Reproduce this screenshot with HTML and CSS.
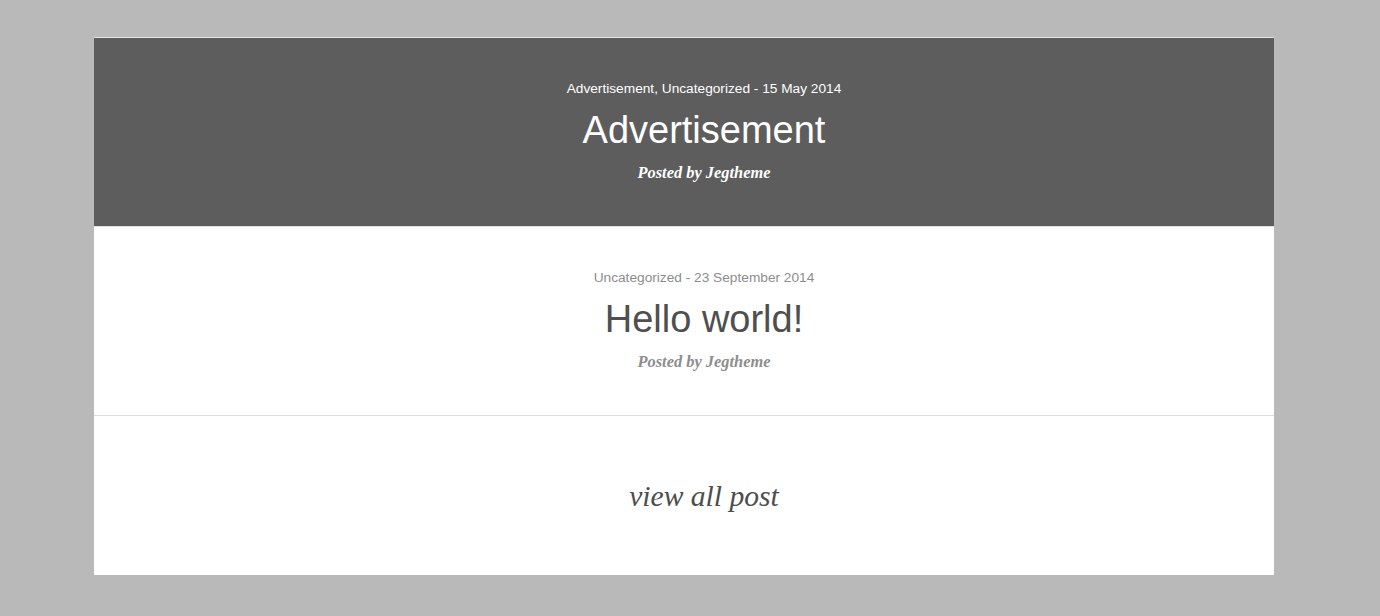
FILE: index.html
```html
<!DOCTYPE html>
<html>
<head>
    <meta charset="utf-8">
    <title>Posts</title>
    <link rel="stylesheet" href="styles.css">
</head>
<body>
    <div class="panel">
        <div class="post post-dark">
            <div class="meta">Advertisement, Uncategorized - 15 May 2014</div>
            <h2 class="title">Advertisement</h2>
            <div class="author">Posted by Jegtheme</div>
        </div>

        <div class="post">
            <div class="meta">Uncategorized - 23 September 2014</div>
            <h2 class="title">Hello world!</h2>
            <div class="author">Posted by Jegtheme</div>
        </div>

        <div class="view-all">
            <a href="#">view all post</a>
        </div>
    </div>
</body>
</html>
```

FILE: styles.css
```css
body {
    font-family: "Liberation Sans", Arial, sans-serif;
    background-color: #b9b9b9;
    margin: 0;
    padding: 37px 0 0 94px;
    color: #555;
}

.panel {
    width: 1180px;
    background-color: #FFF;
    border-top: 1px solid #e4e4e4;
}

.post {
    text-align: center;
    padding: 41px 0 43px 40px;
    border-bottom: 1px solid #ddd;
}

.post-dark {
    background-color: #5d5d5d;
    color: #FFF;
}

.meta {
    font-size: 13.7px;
    line-height: 20px;
    color: #8d8d8d;
}

.title {
    font-size: 38px;
    font-weight: 400;
    line-height: 46px;
    margin: 8px 0 0;
    color: #4f4f4f;
}

.author {
    font-family: "Liberation Serif", Georgia, serif;
    font-style: italic;
    font-weight: 700;
    font-size: 16.4px;
    line-height: 20px;
    margin-top: 10px;
    color: #8d8d8d;
}

.post-dark .meta,
.post-dark .title,
.post-dark .author {
    color: #FFF;
}

.view-all {
    text-align: center;
    padding: 65px 0 64px 40px;
}

.view-all a {
    font-family: "Liberation Serif", Georgia, serif;
    font-style: italic;
    font-size: 29.6px;
    line-height: 30px;
    color: #4d4d4d;
    text-decoration: none;
}
```
